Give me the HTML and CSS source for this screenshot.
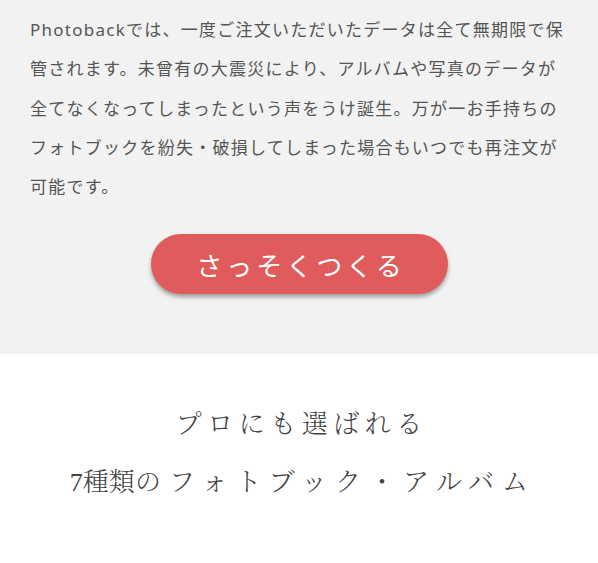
FILE: index.html
```html
<!DOCTYPE html>
<html lang="ja">
<head>
<meta charset="utf-8">
<title>Photoback</title>
<link rel="stylesheet" href="styles.css">
</head>
<body>
<section class="intro">
  <p class="intro-text">Photobackでは、一度ご注文いただいたデータは全て無期限で保<br>管されます。未曾有の大震災により、アルバムや写真のデータが<br>全てなくなってしまったという声をうけ誕生。万が一お手持ちの<br>フォトブックを紛失・破損してしまった場合もいつでも再注文が<br>可能です。</p>
  <div class="cta-wrap">
    <a class="cta" href="#">さっそくつくる</a>
  </div>
</section>
<section class="lineup">
  <h2 class="lineup-title">
    <span class="line1">プロにも選ばれる</span>
    <span class="line2"><span class="num">7種類</span>のフォトブック・アルバム</span>
  </h2>
</section>
</body>
</html>
```

FILE: styles.css
```css
html, body {
  margin: 0;
  padding: 0;
  background: #ffffff;
}
body {
  width: 598px;
  font-family: "Noto Sans", "Noto Sans CJK JP", sans-serif;
}
.intro {
  background: #f2f2f2;
  padding: 10px 30px 60px;
}
.intro-text {
  margin: 0;
  font-size: 17px;
  line-height: 39.25px;
  letter-spacing: 1.25px;
  color: #555555;
  white-space: nowrap;
}
.cta-wrap {
  margin-top: 28px;
  display: flex;
  justify-content: center;
}
.cta {
  display: flex;
  align-items: center;
  justify-content: center;
  width: 297px;
  height: 60px;
  border-radius: 30px;
  background: #e05b5b;
  color: #ffffff;
  text-decoration: none;
  font-family: "Noto Sans CJK JP", sans-serif;
  font-size: 26px;
  letter-spacing: 4px;
  padding-left: 4px;
  box-sizing: border-box;
  box-shadow: 0 3px 4px rgba(0, 0, 0, 0.35);
}
.lineup {
  padding: 42px 0 40px;
}
.lineup-title {
  margin: 0;
  display: flex;
  flex-direction: column;
  align-items: center;
  font-family: "Liberation Serif", "Noto Serif CJK JP", "Noto Sans CJK JP", serif;
  font-weight: 300;
  font-size: 26px;
  line-height: 58px;
  color: #444444;
}
.line1 {
  letter-spacing: 5.5px;
  padding-left: 5.5px;
}
.line2 {
  letter-spacing: 8px;
  padding-left: 8px;
}
.num {
  letter-spacing: 0;
}
```
